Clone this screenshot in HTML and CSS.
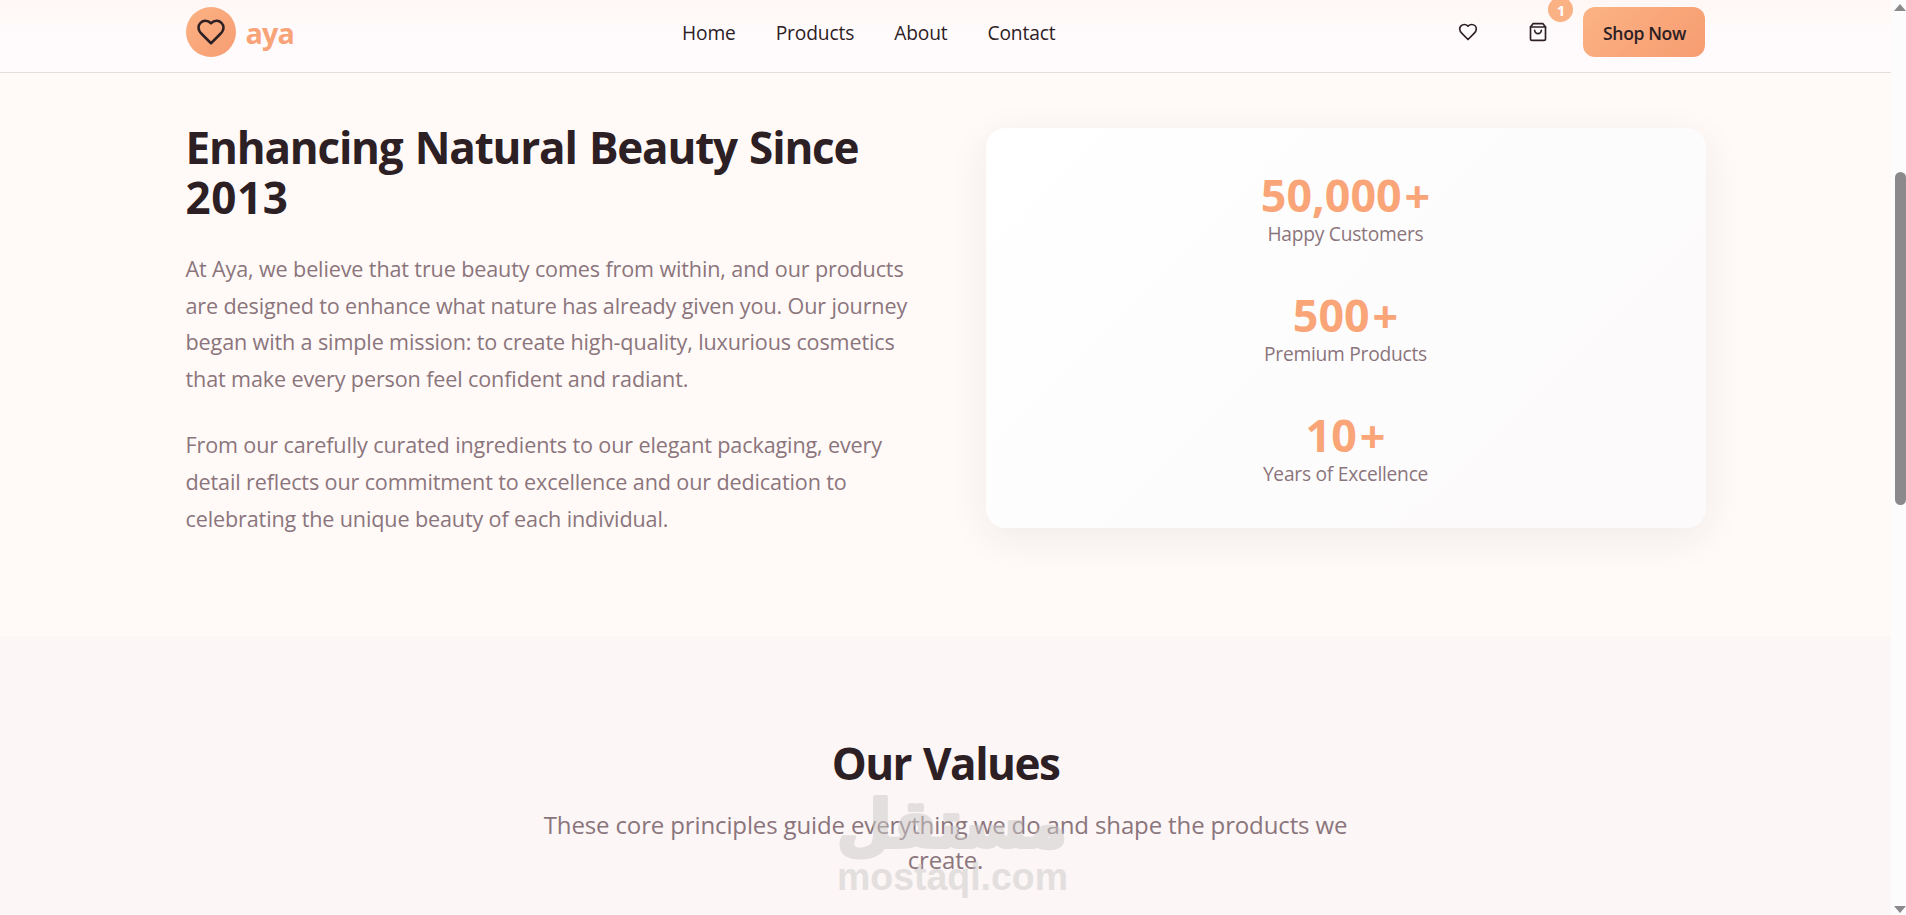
FILE: index.html
```html
<!DOCTYPE html>
<html lang="en">
<head>
  <meta charset="UTF-8">
  <meta name="viewport" content="width=device-width, initial-scale=1.0">
  <title>Aya Cosmetics</title>
  <link rel="stylesheet" href="styles.css">
</head>
<body>
  <div class="page">
    <header class="header">
      <div class="container header-inner">
        <a class="logo">
          <span class="logo-icon">
            <svg width="30" height="30" viewBox="0 0 24 24"><path d="M19 14c1.49-1.46 3-3.21 3-5.5A5.5 5.5 0 0 0 16.5 3c-1.76 0-3 .5-4.5 2-1.5-1.5-2.74-2-4.5-2A5.5 5.5 0 0 0 2 8.5c0 2.3 1.5 4.05 3 5.5l7 7Z"/></svg>
          </span>
          <span class="logo-text">aya</span>
        </a>
        <nav class="nav">
          <a>Home</a>
          <a>Products</a>
          <a>About</a>
          <a>Contact</a>
        </nav>
        <div class="actions">
          <button class="icon-btn" aria-label="Wishlist">
            <svg width="20" height="20" viewBox="0 0 24 24"><path d="M19 14c1.49-1.46 3-3.21 3-5.5A5.5 5.5 0 0 0 16.5 3c-1.76 0-3 .5-4.5 2-1.5-1.5-2.74-2-4.5-2A5.5 5.5 0 0 0 2 8.5c0 2.3 1.5 4.05 3 5.5l7 7Z"/></svg>
          </button>
          <button class="icon-btn" aria-label="Cart">
            <svg width="20" height="20" viewBox="0 0 24 24"><path d="M6 2 3 6v14a2 2 0 0 0 2 2h14a2 2 0 0 0 2-2V6l-3-4Z"/><path d="M3 6h18"/><path d="M16 10a4 4 0 0 1-8 0"/></svg>
            <span class="badge">1</span>
          </button>
          <button class="shop-btn">Shop Now</button>
        </div>
      </div>
    </header>

    <section class="about">
      <div class="container about-grid">
        <div class="about-text">
          <h2>Enhancing Natural Beauty Since<br><span class="year">2013</span></h2>
          <p>At Aya, we believe that true beauty comes from within, and our products<br>
            are designed to enhance what nature has already given you. Our journey<br>
            began with a simple mission: to create high-quality, luxurious cosmetics<br>
            that make every person feel confident and radiant.</p>
          <p>From our carefully curated ingredients to our elegant packaging, every<br>
            detail reflects our commitment to excellence and our dedication to<br>
            celebrating the unique beauty of each individual.</p>
        </div>
        <div class="stats">
          <div class="stat">
            <div class="stat-number">50,000<span class="plus">+</span></div>
            <div class="stat-label">Happy Customers</div>
          </div>
          <div class="stat">
            <div class="stat-number">500<span class="plus">+</span></div>
            <div class="stat-label">Premium Products</div>
          </div>
          <div class="stat">
            <div class="stat-number">10<span class="plus">+</span></div>
            <div class="stat-label">Years of Excellence</div>
          </div>
        </div>
      </div>
    </section>

    <section class="values">
      <h2>Our Values</h2>
      <p>These core principles guide everything we do and shape the products we<br>create.</p>
    </section>
  </div>

  <div class="scrollbar">
    <span class="arrow-up"></span>
    <span class="thumb"></span>
    <span class="arrow-down"></span>
  </div>

  <svg class="watermark" width="240" height="120" viewBox="0 0 240 120">
    <text class="wm-ar" x="120" y="62" text-anchor="middle" direction="rtl" textLength="230" lengthAdjust="spacingAndGlyphs">مستقل</text>
    <text class="wm-en" x="5" y="105" textLength="231" lengthAdjust="spacingAndGlyphs">mostaql.com</text>
  </svg>
</body>
</html>
```
FILE: styles.css
```css
* {
  margin: 0;
  padding: 0;
  box-sizing: border-box;
}

body {
  display: flex;
  height: 915px;
  overflow: hidden;
  font-family: "Open Sans", "Noto Sans", sans-serif;
  color: #2d2024;
  background: #fffaf8;
}

.page {
  width: 1891px;
  height: 915px;
  overflow: hidden;
}

.container {
  width: 1520px;
  margin: 0 auto;
}

svg {
  fill: none;
  stroke: #2d2024;
  stroke-width: 2;
  stroke-linecap: round;
  stroke-linejoin: round;
}

.header {
  height: 73px;
  padding-top: 7px;
  border-bottom: 1px solid #e3dddf;
  background: linear-gradient(#fff7f6 0, #fffaf9 25px, #fffbfc 26px);
}

.header-inner {
  display: flex;
  justify-content: space-between;
  align-items: center;
  height: 50px;
}

.logo {
  display: flex;
  align-items: center;
  gap: 10px;
}

.logo-icon {
  display: flex;
  align-items: center;
  justify-content: center;
  width: 50px;
  height: 50px;
  border-radius: 50%;
  background: linear-gradient(135deg, #fbb383, #f79c72);
}

.logo-text {
  padding-top: 2px;
  font-size: 28.8px;
  font-weight: 700;
  line-height: 48px;
  letter-spacing: -0.9px;
  color: #f8a478;
}

.nav {
  display: flex;
  gap: 40px;
  padding-top: 1px;
  font-size: 19.2px;
  letter-spacing: -0.14px;
}

.actions {
  display: flex;
  gap: 20px;
}

button {
  border: none;
  background: none;
  font-family: inherit;
  color: inherit;
}

.icon-btn {
  position: relative;
  display: flex;
  align-items: center;
  justify-content: center;
  width: 50px;
  height: 50px;
}

.badge {
  position: absolute;
  top: -10px;
  right: -10px;
  width: 25px;
  height: 25px;
  border-radius: 50%;
  background: #fab184;
  color: #fff;
  font-size: 15px;
  font-weight: 700;
  line-height: 27px;
  text-align: center;
}

.shop-btn {
  width: 122px;
  height: 50px;
  padding-top: 2px;
  border-radius: 12px;
  background: linear-gradient(135deg, #fbb383, #f79c72);
  font-size: 17.6px;
  font-weight: 600;
  letter-spacing: -0.4px;
  white-space: nowrap;
}

.about {
  height: 563px;
  padding-top: 49px;
}

.about-grid {
  display: grid;
  grid-template-columns: 720px 720px;
  gap: 80px;
  align-items: start;
}

h2 {
  font-size: 44px;
  font-weight: 700;
  line-height: 50px;
  letter-spacing: -1.2px;
  word-spacing: 2px;
}

.year {
  letter-spacing: 0.6px;
}

.about-text p {
  margin-top: 30px;
  font-size: 21.6px;
  line-height: 36.6px;
  letter-spacing: -0.14px;
  white-space: nowrap;
  color: #8b757c;
}

.about-text h2 + p {
  margin-top: 29px;
}

.stats {
  display: flex;
  flex-direction: column;
  gap: 43px;
  height: 400px;
  margin-top: 6px;
  padding-top: 44px;
  border-radius: 20px;
  background: linear-gradient(135deg, #fff, #fcfafb);
  box-shadow: 0 10px 40px rgba(45, 32, 36, 0.07);
  text-align: center;
}

.stat-number {
  height: 45px;
  font-size: 44.8px;
  font-weight: 700;
  line-height: 45px;
  color: #f9a578;
}

.plus {
  margin-left: 3px;
  vertical-align: -1px;
  line-height: 1;
}

.stat-label {
  padding-top: 1px;
  font-size: 19.2px;
  line-height: 31px;
  letter-spacing: -0.25px;
  color: #8b757c;
}

.values {
  height: 279px;
  padding-top: 102px;
  background: #fcf6f6;
  text-align: center;
}

.values h2 {
  letter-spacing: -1.5px;
}

.values p {
  margin-top: 19px;
  font-size: 24px;
  line-height: 35px;
  letter-spacing: -0.13px;
  color: #8b757c;
}

.scrollbar {
  display: flex;
  flex-direction: column;
  align-items: flex-end;
  width: 15px;
  height: 915px;
  padding-top: 4px;
  background: #fcfcfc;
}

.arrow-up,
.arrow-down {
  width: 12px;
  height: 7px;
  background: #8c898c;
  clip-path: polygon(50% 0, 100% 100%, 0 100%);
}

.thumb {
  width: 11px;
  height: 333px;
  margin: 161px 0 401px;
  border-radius: 6px;
  background: #8c898c;
}

.arrow-down {
  clip-path: polygon(0 0, 100% 0, 50% 100%);
}

.watermark {
  position: absolute;
  left: 832px;
  top: 785px;
  stroke: none;
  fill: rgb(204, 202, 201);
  opacity: 0.5;
}

.wm-ar {
  font-family: "DejaVu Sans", sans-serif;
  font-size: 66px;
  font-weight: 700;
  stroke: rgb(204, 202, 201);
  stroke-width: 4;
}

.wm-en {
  font-family: "Liberation Sans", Arial, sans-serif;
  font-size: 38px;
  font-weight: 700;
}
```
